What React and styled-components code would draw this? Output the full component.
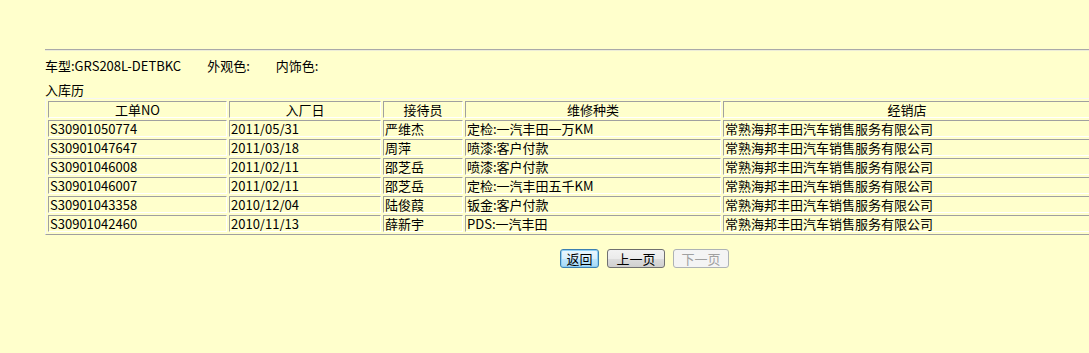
import React from "react";
import styled, { createGlobalStyle, css } from "styled-components";

const Global = createGlobalStyle`
  html, body {
    margin: 0;
    padding: 0;
    background: #ffffcc;
    overflow: hidden;
  }
  body {
    font-family: "Noto Sans CJK SC", "Noto Sans", sans-serif;
    font-size: 13px;
    color: #000;
  }
`;

const Page = styled.div`
  padding: 49px 0 0 44px;
  width: 1100px;
`;

const Rule = styled.div`
  height: 0;
  border-top: 1px solid #a9a9a9;
  border-bottom: 1px solid #ececd8;
  margin-left: 1px;
`;

const InfoRow = styled.div`
  display: flex;
  gap: 26px;
  margin-top: 7px;
  padding-left: 1px;
  line-height: 16px;
  height: 16px;
`;

const Field = styled.span`
  letter-spacing: ${(p) => (p.$tight ? "-0.3px" : "0")};
`;

const Caption = styled.div`
  margin-top: 8px;
  padding-left: 1px;
  line-height: 16px;
  height: 16px;
`;

const Table = styled.table`
  margin-left: 1px;
  border-collapse: separate;
  border-spacing: 2px;
  table-layout: fixed;
  width: 1049px;
  border: 1px solid;
  border-color: #f6f6f6 #a0a0a0 #a0a0a0 #f6f6f6;
`;

const cellBase = css`
  box-sizing: border-box;
  height: 17px;
  padding: 0 1px;
  line-height: 15px;
  font-size: 13px;
  font-weight: normal;
  border: 1px solid;
  border-color: #a0a0a0 #ffffff #ffffff #a0a0a0;
  white-space: nowrap;
  overflow: hidden;
  vertical-align: middle;
`;

const Th = styled.th`
  ${cellBase};
  width: ${(p) => p.$w}px;
  text-align: center;
`;

const Td = styled.td`
  ${cellBase};
  text-align: left;
`;

const ButtonRow = styled.div`
  display: flex;
  gap: 8px;
  margin-top: 14px;
  padding-left: 516px;
`;

const Button = styled.button`
  box-sizing: border-box;
  width: ${(p) => p.$w}px;
  height: 19px;
  padding: 0;
  font-family: "Noto Sans CJK SC", "Noto Sans", sans-serif;
  font-size: 13px;
  line-height: 15px;
  border-radius: 3px;
  border: 1px solid #707070;
  background: linear-gradient(#f2f2f2, #ebebeb 50%, #dddddd 51%, #cfcfcf);
  color: #000;
  ${(p) =>
    p.$focused &&
    css`
      border-color: #3c7fb1;
      box-shadow: inset 0 0 0 1px #8ed0f5;
      background: linear-gradient(#eaf6fd, #d9f0fc 50%, #bee6fd 51%, #a7d9f5);
    `}
  &:disabled {
    border-color: #adb2b5;
    background: #f4f4f4;
    color: #a0a0a0;
  }
`;

const columns = [
  { label: "工单NO", w: 179 },
  { label: "入厂日", w: 152 },
  { label: "接待员", w: 80 },
  { label: "维修种类", w: 256 },
  { label: "经销店", w: 368 },
];

const rows = [
  ["S30901050774", "2011/05/31", "严维杰", "定检:一汽丰田一万KM"],
  ["S30901047647", "2011/03/18", "周萍", "喷漆:客户付款"],
  ["S30901046008", "2011/02/11", "邵芝岳", "喷漆:客户付款"],
  ["S30901046007", "2011/02/11", "邵芝岳", "定检:一汽丰田五千KM"],
  ["S30901043358", "2010/12/04", "陆俊葭", "钣金:客户付款"],
  ["S30901042460", "2010/11/13", "薛新宇", "PDS:一汽丰田"],
];

const dealer = "常熟海邦丰田汽车销售服务有限公司";

export default function App() {
  return (
    <>
      <Global />
      <Page>
        <Rule />
        <InfoRow>
          <Field>车型:GRS208L-DETBKC</Field>
          <Field>外观色:</Field>
          <Field>内饰色:</Field>
        </InfoRow>
        <Caption>入库历</Caption>
        <Table>
          <thead>
            <tr>
              {columns.map((c) => (
                <Th key={c.label} $w={c.w}>
                  {c.label}
                </Th>
              ))}
            </tr>
          </thead>
          <tbody>
            {rows.map((r) => (
              <tr key={r[0]}>
                {r.map((v, i) => (
                  <Td key={i}>{v}</Td>
                ))}
                <Td>{dealer}</Td>
              </tr>
            ))}
          </tbody>
        </Table>
        <ButtonRow>
          <Button $w={39} $focused>返回</Button>
          <Button $w={58}>上一页</Button>
          <Button $w={56} disabled>下一页</Button>
        </ButtonRow>
      </Page>
    </>
  );
}
